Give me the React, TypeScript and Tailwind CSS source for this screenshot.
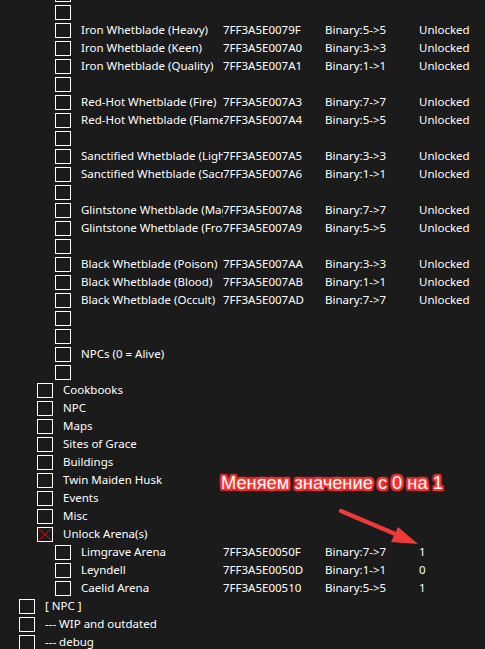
import React from "react";

type Row = {
  lvl: 0 | 1 | 2;
  d?: string;
  a?: string;
  t?: string;
  v?: string;
  x?: boolean;
};

const A = 0, B = 1, C = 2;

const rows: Row[] = [
  { lvl: A },
  { lvl: A },
  { lvl: A, d: "Iron Whetblade (Heavy)", a: "7FF3A5E0079F", t: "Binary:5->5", v: "Unlocked" },
  { lvl: A, d: "Iron Whetblade (Keen)", a: "7FF3A5E007A0", t: "Binary:3->3", v: "Unlocked" },
  { lvl: A, d: "Iron Whetblade (Quality)", a: "7FF3A5E007A1", t: "Binary:1->1", v: "Unlocked" },
  { lvl: A },
  { lvl: A, d: "Red-Hot Whetblade (Fire)", a: "7FF3A5E007A3", t: "Binary:7->7", v: "Unlocked" },
  { lvl: A, d: "Red-Hot Whetblade (Flame Art)", a: "7FF3A5E007A4", t: "Binary:5->5", v: "Unlocked" },
  { lvl: A },
  { lvl: A, d: "Sanctified Whetblade (Light)", a: "7FF3A5E007A5", t: "Binary:3->3", v: "Unlocked" },
  { lvl: A, d: "Sanctified Whetblade (Sacred)", a: "7FF3A5E007A6", t: "Binary:1->1", v: "Unlocked" },
  { lvl: A },
  { lvl: A, d: "Glintstone Whetblade (Magic)", a: "7FF3A5E007A8", t: "Binary:7->7", v: "Unlocked" },
  { lvl: A, d: "Glintstone Whetblade (Frost)", a: "7FF3A5E007A9", t: "Binary:5->5", v: "Unlocked" },
  { lvl: A },
  { lvl: A, d: "Black Whetblade (Poison)", a: "7FF3A5E007AA", t: "Binary:3->3", v: "Unlocked" },
  { lvl: A, d: "Black Whetblade (Blood)", a: "7FF3A5E007AB", t: "Binary:1->1", v: "Unlocked" },
  { lvl: A, d: "Black Whetblade (Occult)", a: "7FF3A5E007AD", t: "Binary:7->7", v: "Unlocked" },
  { lvl: A },
  { lvl: A },
  { lvl: A, d: "NPCs (0 = Alive)" },
  { lvl: A },
  { lvl: B, d: "Cookbooks" },
  { lvl: B, d: "NPC" },
  { lvl: B, d: "Maps" },
  { lvl: B, d: "Sites of Grace" },
  { lvl: B, d: "Buildings" },
  { lvl: B, d: "Twin Maiden Husk" },
  { lvl: B, d: "Events" },
  { lvl: B, d: "Misc" },
  { lvl: B, d: "Unlock Arena(s)", x: true },
  { lvl: A, d: "Limgrave Arena", a: "7FF3A5E0050F", t: "Binary:7->7", v: "1" },
  { lvl: A, d: "Leyndell", a: "7FF3A5E0050D", t: "Binary:1->1", v: "0" },
  { lvl: A, d: "Caelid Arena", a: "7FF3A5E00510", t: "Binary:5->5", v: "1" },
  { lvl: C, d: "[ NPC ]" },
  { lvl: C, d: "--- WIP and outdated" },
  { lvl: C, d: "--- debug" },
];

const indent = ["pl-[55px]", "pl-[37px]", "pl-[19px]"];

function Box({ x }: { x?: boolean }) {
  return (
    <div className="relative w-[16px] h-[15px] shrink-0 border border-white">
      {x && (
        <svg className="absolute inset-0" width="14" height="13" viewBox="0 0 14 13">
          <line x1="0.5" y1="0.5" x2="13.5" y2="12.5" stroke="#ff0000" strokeWidth="1" />
          <line x1="13.5" y1="0.5" x2="0.5" y2="12.5" stroke="#ff0000" strokeWidth="1" />
        </svg>
      )}
    </div>
  );
}

export default function App() {
  return (
    <div
      className="relative w-[485px] h-[649px] overflow-hidden bg-[#1b1b1b] text-white text-[11.5px] leading-[18px]"
      style={{ fontFamily: '"Noto Sans", "Open Sans", sans-serif' }}
    >
      <div className="-mt-[15px] flex flex-col">
        {rows.map((r, i) => (
          <div key={i} className="flex h-[18px] items-center">
            <div className={`w-[223px] shrink-0 flex items-center overflow-hidden ${indent[r.lvl]}`}>
              <Box x={r.x} />
              <span className="ml-[10px] whitespace-nowrap">{r.d ?? ""}</span>
            </div>
            <div className="w-[102px] shrink-0 whitespace-nowrap">{r.a ?? ""}</div>
            <div className="w-[94px] shrink-0 whitespace-nowrap">{r.t ?? ""}</div>
            <div className="whitespace-nowrap">{r.v ?? ""}</div>
          </div>
        ))}
      </div>

      <div
        className="absolute left-[221px] top-[472px] text-[18.3px] leading-[22px] text-white whitespace-nowrap [text-shadow:0_0_1px_#f33,1px_0_0_#f33,-1px_0_0_#f33,0_1px_0_#f33,0_-1px_0_#f33,2px_0_1px_#f33,-2px_0_1px_#f33,0_2px_1px_#f33,0_-2px_1px_#f33,2px_2px_1px_#f33,-2px_-2px_1px_#f33,2px_-2px_1px_#f33,-2px_2px_1px_#f33,0_0_4px_#f33]"
        style={{ fontFamily: '"Liberation Sans", Arial, sans-serif' }}
      >
        Меняем значение с 0 на 1
      </div>

      <svg className="absolute left-0 top-0" width="485" height="649" viewBox="0 0 485 649">
        <line x1="341" y1="511" x2="400" y2="536" stroke="#ee3a3a" strokeWidth="4.5" strokeLinecap="round" />
        <polygon points="418,544 391,542 398,527" fill="#ee3a3a" />
      </svg>
    </div>
  );
}
